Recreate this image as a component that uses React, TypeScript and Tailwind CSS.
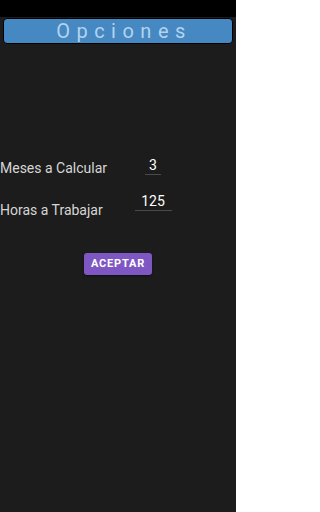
export default function App() {
  return (
    <div
      className="flex h-[512px] w-[236px] flex-col bg-[#1c1c1c] text-[#d6d6d6]"
      style={{ fontFamily: "Roboto, 'Noto Sans', sans-serif" }}
    >
      {/* status bar */}
      <div className="h-[17px] bg-black" />

      {/* title */}
      <div className="mx-[3px] mt-[1px] flex h-[26px] items-center justify-center rounded-[4px] border border-black bg-[#4588c2]">
        <span className="pl-[12px] text-[20px] leading-none tracking-[6.5px] text-[#b3d3ee]">
          Opciones
        </span>
      </div>

      {/* fields */}
      <div className="mt-[112px] flex items-start">
        <span className="w-[106px] whitespace-nowrap pt-[2px] text-[14px] leading-[20px]">
          Meses a Calcular
        </span>
        <div className="flex w-[94px] justify-center">
          <span className="w-[16px] border-b border-[#4a4a4a] text-center text-[14px] leading-[18px] text-white">
            3
          </span>
        </div>
      </div>

      <div className="mt-[14px] flex items-start">
        <span className="w-[106px] whitespace-nowrap pt-[8px] text-[14px] leading-[20px]">
          Horas a Trabajar
        </span>
        <div className="flex w-[94px] justify-center">
          <span className="w-[37px] border-b border-[#4a4a4a] text-center text-[14px] leading-[18px] text-white">
            125
          </span>
        </div>
      </div>

      <div className="mt-[33px] flex justify-center">
        <button className="h-[22px] w-[68px] rounded-[3px] bg-[#7e57c2] text-[11px] font-bold tracking-[0.8px] text-white shadow-[0_1px_2px_rgba(0,0,0,0.5)]">
          ACEPTAR
        </button>
      </div>
    </div>
  );
}
